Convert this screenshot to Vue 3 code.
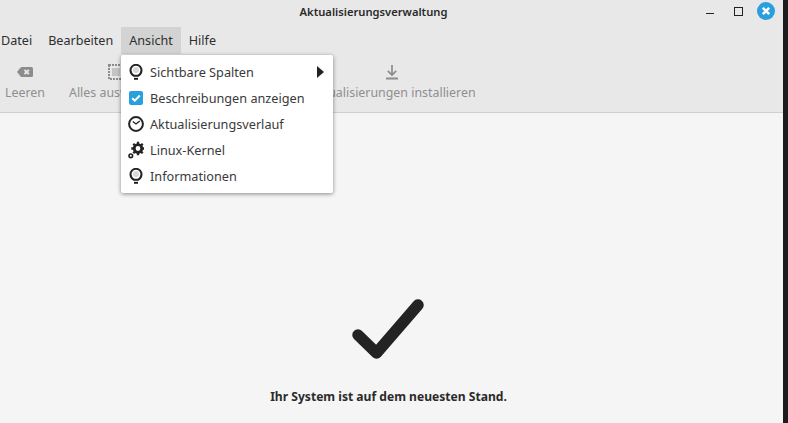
<script setup>
const menuItems = [
  { label: 'Sichtbare Spalten', icon: 'bulb', arrow: true },
  { label: 'Beschreibungen anzeigen', icon: 'check' },
  { label: 'Aktualisierungsverlauf', icon: 'clock' },
  { label: 'Linux-Kernel', icon: 'gear' },
  { label: 'Informationen', icon: 'bulb' }
]
const menus = ['Datei', 'Bearbeiten', 'Ansicht', 'Hilfe']
</script>

<template>
  <div class="desk">
    <div class="window">
      <header class="title">
        <span class="title-text">Aktualisierungsverwaltung</span>
        <div class="controls">
          <span class="min"></span>
          <span class="max"></span>
          <span class="close">
            <svg width="18" height="18" viewBox="0 0 18 18"><circle cx="9" cy="9" r="9" fill="#2a9fdf"/><path d="M5.800 5.800l6.400 6.400M12.200 5.800l-6.400 6.400" stroke="#fff" stroke-width="2.600"/></svg>
          </span>
        </div>
      </header>
      <nav class="menubar">
        <span v-for="m in menus" :key="m" class="menu-title" :class="{ open: m === 'Ansicht' }">{{ m }}</span>
      </nav>
      <div class="toolbar">
        <div class="tool t1">
          <svg width="18" height="16" viewBox="0 0 18 16"><path d="M6 3h9.500A1.500 1.500 0 0 1 17 4.500v7a1.500 1.500 0 0 1-1.500 1.500H6c-.6 0-1-.2-1.400-.6L1 8l3.600-4.400C5 3.200 5.400 3 6 3z" fill="#8c8c8c"/><path d="M8.500 5.800l4.400 4.400M12.900 5.800l-4.400 4.400" stroke="#e8e8e8" stroke-width="1.900"/></svg>
          <span>Leeren</span>
        </div>
        <div class="tool t2">
          <svg width="16" height="16" viewBox="0 0 16 16"><rect x="1" y="1" width="14" height="14" fill="none" stroke="#8c8c8c" stroke-width="2" stroke-dasharray="2 1"/><rect x="4" y="4" width="8" height="8" fill="#c4c4c4"/></svg>
          <span>Alles auswählen</span>
        </div>
        <div class="tool t3">
          <span>Auffrischen</span>
        </div>
        <div class="tool t4">
          <svg width="16" height="16" viewBox="0 0 16 16"><path d="M8 1v10M3.800 6.800L8 11l4.200-4.200" fill="none" stroke="#8c8c8c" stroke-width="1.700"/><path d="M2 14.500h12" stroke="#8c8c8c" stroke-width="2"/></svg>
          <span>Aktualisierungen installieren</span>
        </div>
      </div>
      <main class="content">
        <svg class="big-check" width="73" height="61" viewBox="0 0 73 61"><path d="M6 37L24.500 55 66 7" fill="none" stroke="#232323" stroke-width="11.500" stroke-linecap="round" stroke-linejoin="round"/></svg>
        <p class="status">Ihr System ist auf dem neuesten Stand.</p>
      </main>
      <div class="popup">
        <div v-for="it in menuItems" :key="it.label" class="item">
          <span class="ico">
            <svg v-if="it.icon === 'bulb'" width="14" height="16" viewBox="0 0 14 16"><circle cx="7" cy="6" r="3" fill="#d8d8d8"/><path d="M5 11.800C3 10.700 1.500 8.800 1.500 6.300a5.500 5.500 0 0 1 11 0c0 2.500-1.500 4.400-3.500 5.500z" fill="none" stroke="#222" stroke-width="2" stroke-linejoin="round"/><path d="M5 14.800h4" stroke="#222" stroke-width="2"/></svg>
            <span v-else-if="it.icon === 'check'" class="chk">
              <svg width="14" height="14" viewBox="0 0 14 14"><path d="M3.200 7.200l2.600 2.500 5-5.200" fill="none" stroke="#fff" stroke-width="2"/></svg>
            </span>
            <svg v-else-if="it.icon === 'clock'" width="16" height="16" viewBox="0 0 16 16"><circle cx="8" cy="8" r="6.900" fill="none" stroke="#222" stroke-width="2"/><path d="M4.800 5.600L8 8l3.800-3" fill="none" stroke="#222" stroke-width="1.300"/></svg>
            <svg v-else width="16" height="18" viewBox="0 0 16 18"><circle cx="10" cy="7.500" r="3.800" fill="none" stroke="#222" stroke-width="2.800"/><path d="M10 .8v2.400M10 11.800v2.400M3.300 7.500h2.400M14.300 7.500h2.400M5.300 2.800L7 4.500M13 10.500l1.700 1.700M14.700 2.800L13 4.500M7 10.500l-1.700 1.700" stroke="#222" stroke-width="2.300"/><circle cx="2.800" cy="14.800" r="1.800" fill="none" stroke="#222" stroke-width="1.600"/></svg>
          </span>
          <span class="label">{{ it.label }}</span>
          <span v-if="it.arrow" class="arrow"></span>
        </div>
      </div>
    </div>
    <div class="strip"></div>
  </div>
</template>

<style scoped>
.desk {
  display: flex;
  width: 788px;
  height: 423px;
  overflow: hidden;
  font-family: "Noto Sans", "Open Sans", sans-serif;
  font-size: 12.6px;
  color: #2e2e2e;
}
.window {
  position: relative;
  width: 783px;
  height: 423px;
  display: flex;
  flex-direction: column;
  background: #f5f5f5;
}
.strip { flex: 1; background: #1c1c1c; }
.title {
  position: relative;
  height: 27px;
  background: #e8e8e8;
  display: flex;
  justify-content: center;
  flex: none;
}
.title-text {
  font-size: 11.2px;
  font-weight: 600;
  line-height: 23px;
  color: #2a2a2a;
  margin-left: -36px;
}
.controls {
  position: absolute;
  right: 0;
  top: 2px;
  display: flex;
  align-items: flex-start;
}
.min { width: 8px; height: 1px; background: #222; margin-top: 11px; margin-right: 20px; }
.max { width: 7px; height: 7px; border: 1px solid #222; margin-top: 5px; margin-right: 14px; }
.close { display: flex; width: 18px; height: 18px; margin-right: 8px; }
.menubar {
  height: 27px;
  background: #e8e8e8;
  display: flex;
  flex: none;
  padding-left: 1px;
}
.menu-title {
  padding: 0 8px;
  display: flex;
  align-items: center;
  height: 27px;
}
.menu-title:first-child { padding-left: 0; }
.menu-title.open { background: #d3d3d3; }
.toolbar {
  background: #e8e8e8;
  border-bottom: 1px solid #cfcfcf;
  box-sizing: border-box;
  height: 59px;
  display: flex;
  flex: none;
  padding-left: 5px;
  font-size: 12.4px;
}
.tool {
  display: flex;
  flex-direction: column;
  align-items: center;
  color: #8f8f8f;
  padding-top: 10px;
  gap: 4px;
  line-height: 18px;
}
.tool svg { display: block; }
.t2 { margin-left: 24px; }
.t3 { margin-left: 24px; width: 123px; }
.content {
  flex: 1;
  display: flex;
  flex-direction: column;
  align-items: center;
  padding-top: 185px;
  padding-right: 6px;
}
.big-check { display: block; flex: none; }
.status {
  margin: 29px 0 0;
  font-size: 12.1px;
  font-weight: 700;
  color: #2a2a2a;
  line-height: 18px;
}
.popup {
  position: absolute;
  left: 121px;
  top: 55px;
  width: 212px;
  height: 138px;
  box-sizing: border-box;
  padding: 4px 0;
  background: #fff;
  border-radius: 2px;
  box-shadow: 0 1px 4px rgba(0, 0, 0, .45);
  font-size: 12.7px;
}
.item {
  position: relative;
  height: 26px;
  display: flex;
  align-items: center;
  color: #3a3a3a;
}
.ico {
  width: 29px;
  flex: none;
  display: flex;
  justify-content: center;
}
.chk {
  width: 14px;
  height: 14px;
  background: #2a9fdf;
  border-radius: 2px;
  display: block;
}
.chk svg { display: block; }
.label { white-space: nowrap; }
.arrow {
  position: absolute;
  right: 9px;
  top: 7px;
  border-left: 7px solid #222;
  border-top: 6px solid transparent;
  border-bottom: 6px solid transparent;
}
</style>
